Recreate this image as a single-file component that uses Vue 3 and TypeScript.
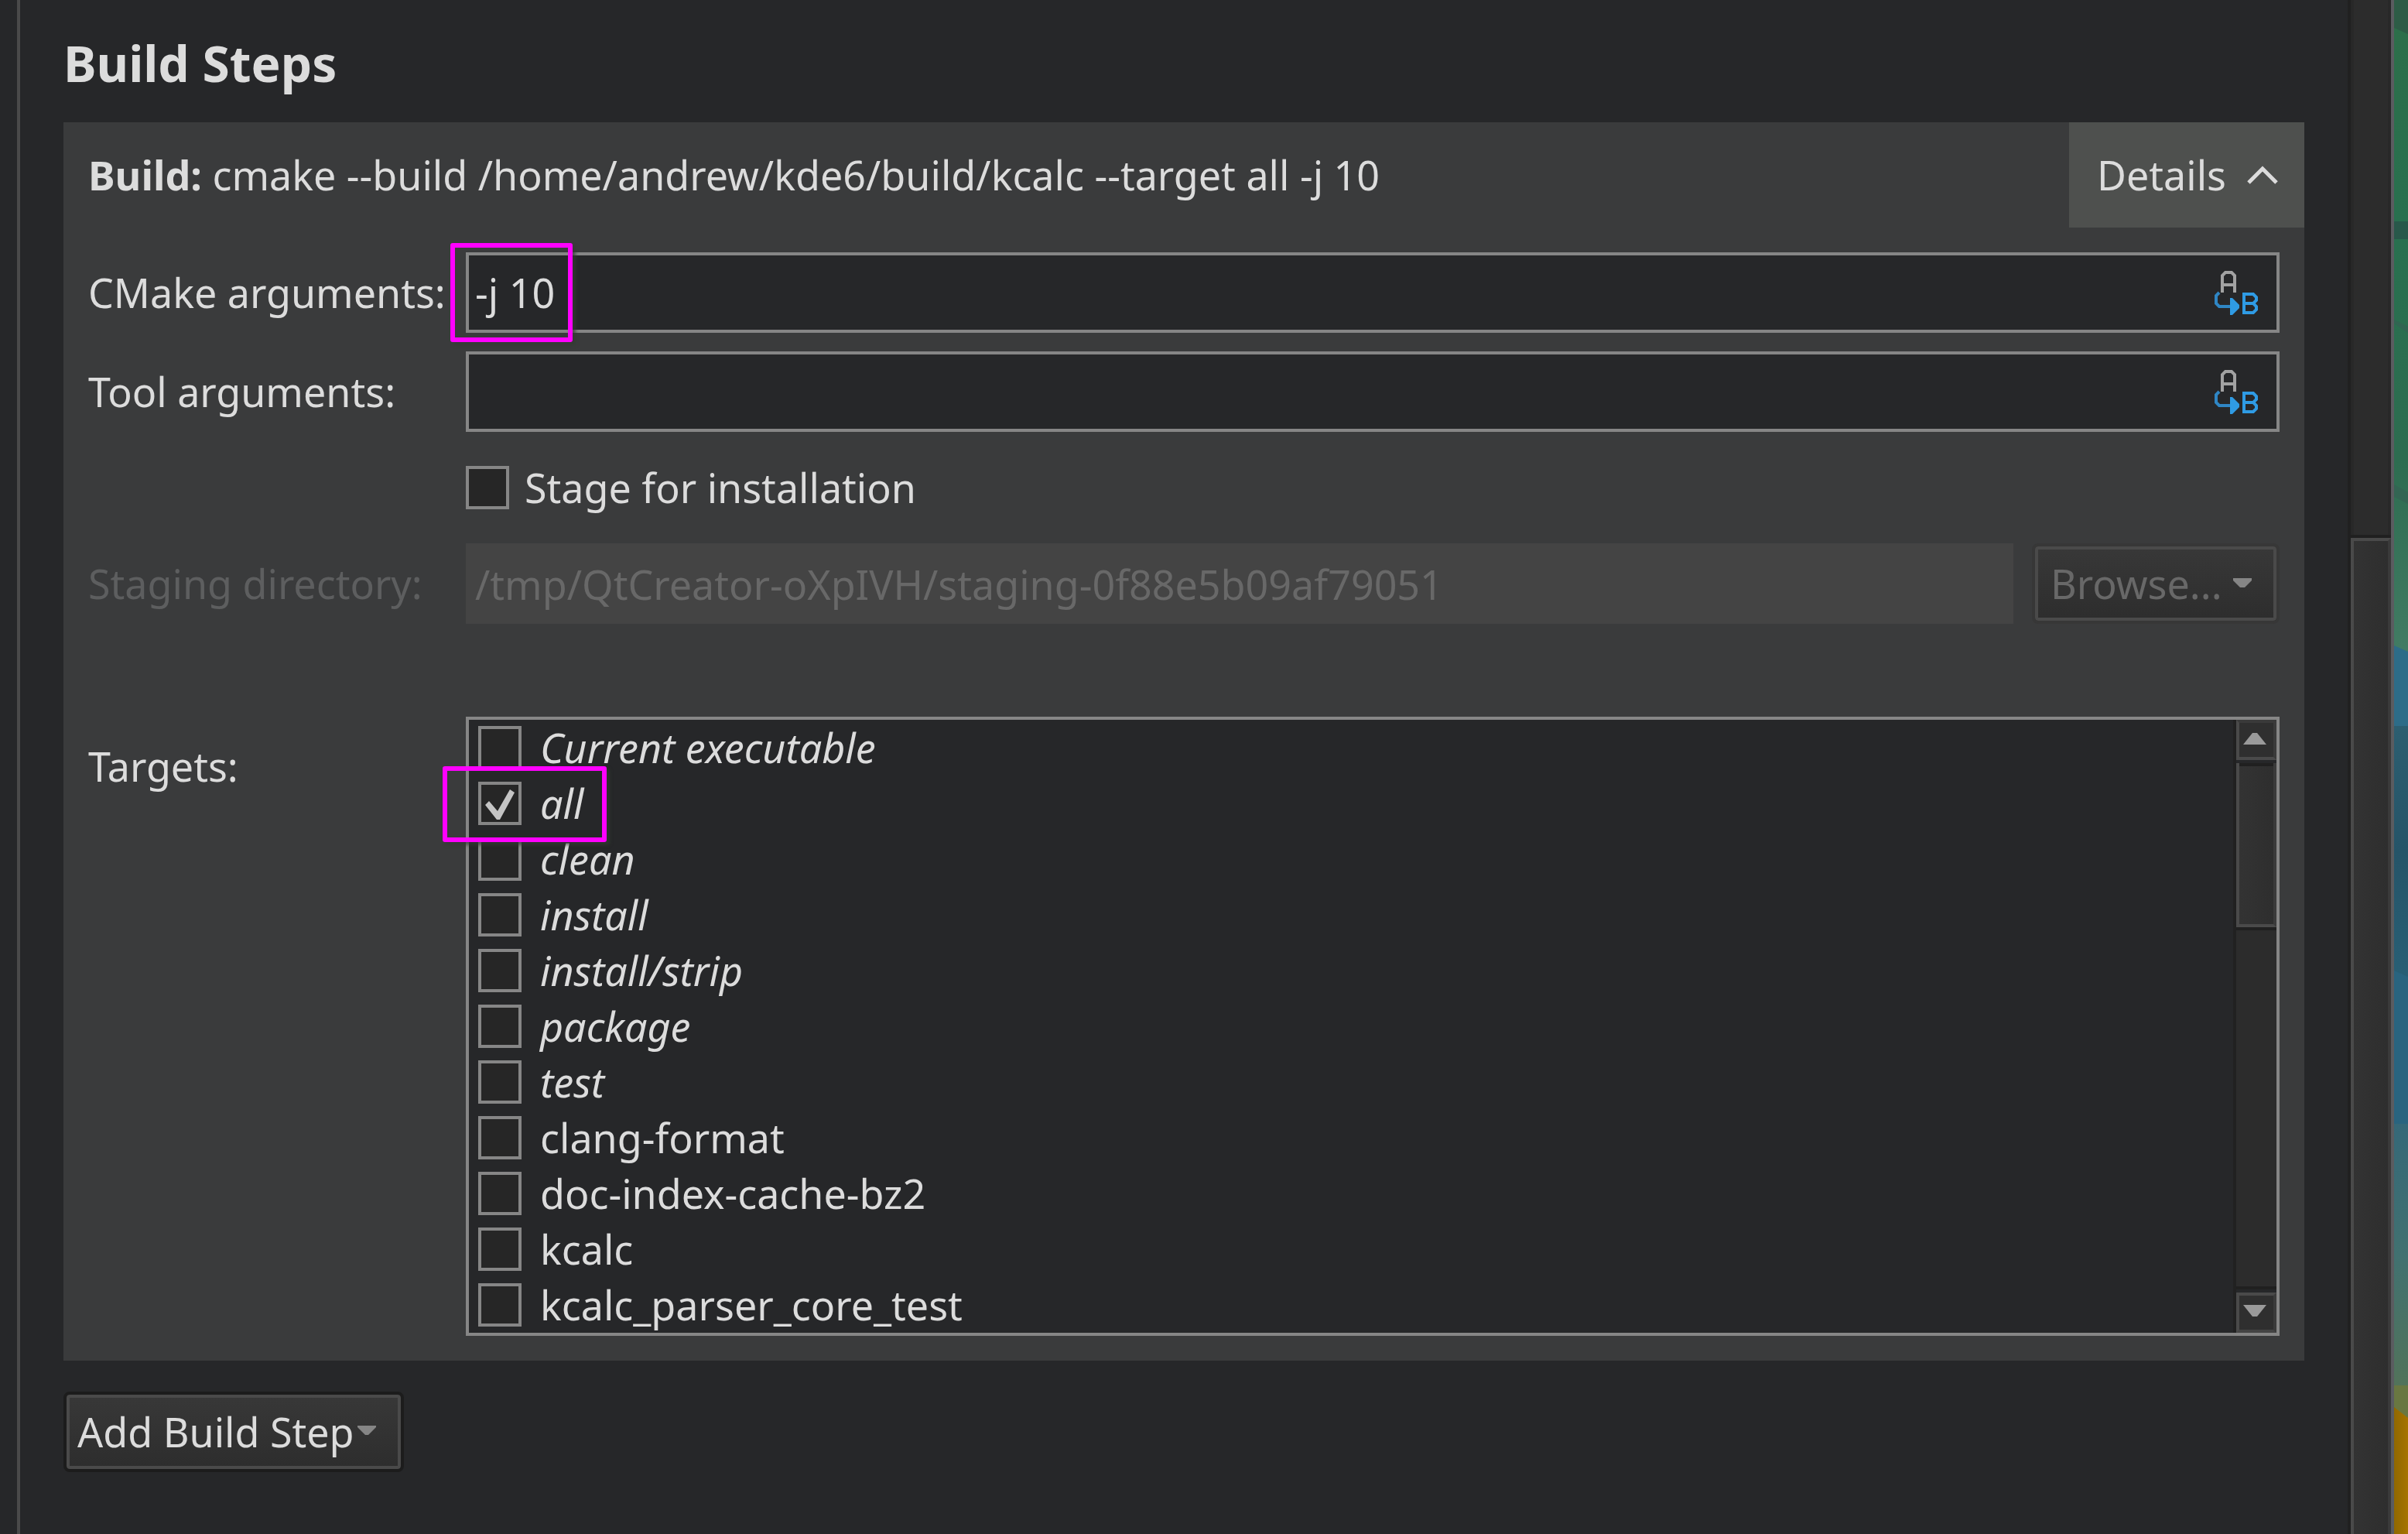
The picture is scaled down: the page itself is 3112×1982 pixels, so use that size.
<script setup lang="ts">
import { ref } from 'vue'

interface Target {
  name: string
  special: boolean
  checked: boolean
}

const cmakeArgs = ref('-j 10')
const toolArgs = ref('')
const stage = ref(false)
const stagingDir = ref('/tmp/QtCreator-oXpIVH/staging-0f88e5b09af79051')

const targets = ref<Target[]>([
  { name: 'Current executable', special: true, checked: false },
  { name: 'all', special: true, checked: true },
  { name: 'clean', special: true, checked: false },
  { name: 'install', special: true, checked: false },
  { name: 'install/strip', special: true, checked: false },
  { name: 'package', special: true, checked: false },
  { name: 'test', special: true, checked: false },
  { name: 'clang-format', special: false, checked: false },
  { name: 'doc-index-cache-bz2', special: false, checked: false },
  { name: 'kcalc', special: false, checked: false },
  { name: 'kcalc_parser_core_test', special: false, checked: false },
])
</script>

<template>
  <div class="desktop">
    <div class="window">
      <main class="content">
        <h1>Build Steps</h1>

        <section class="panel">
          <header class="panel-head">
            <p class="summary"><b>Build:</b> cmake --build /home/andrew/kde6/build/kcalc --target all -j 10</p>
            <button class="details" type="button">
              Details
              <svg width="40" height="26" viewBox="0 0 40 26" aria-hidden="true">
                <path d="M2 23 L20 5 L38 23" fill="none" stroke="#dcdcdc" stroke-width="5" />
              </svg>
            </button>
          </header>

          <div class="form">
            <label for="cmake-args">CMake arguments:</label>
            <div class="field">
              <input id="cmake-args" v-model="cmakeArgs" type="text" />
              <button class="expand" type="button" aria-label="Expand variables">
                <svg width="56" height="56" viewBox="0 0 56 56" aria-hidden="true">
                  <path d="M10 28V6L14 2H22L26 6V28M10 18H26" fill="none" stroke="#a2a2a2" stroke-width="4" />
                  <path d="M6 28L2 32V42L6 46H24" fill="none" stroke="#2f86c4" stroke-width="4" />
                  <path d="M20 35H23L32 44V48L23 57H20Z" fill="#2f9be4" />
                  <path d="M38 30H50L54 34V38L50 42L54 46V50L50 54H38ZM38 42H50" fill="none" stroke="#2f9be4" stroke-width="4" />
                </svg>
              </button>
              <span class="mark mark-args" aria-hidden="true"></span>
            </div>

            <label for="tool-args">Tool arguments:</label>
            <div class="field">
              <input id="tool-args" v-model="toolArgs" type="text" />
              <button class="expand" type="button" aria-label="Expand variables">
                <svg width="56" height="56" viewBox="0 0 56 56" aria-hidden="true">
                  <path d="M10 28V6L14 2H22L26 6V28M10 18H26" fill="none" stroke="#a2a2a2" stroke-width="4" />
                  <path d="M6 28L2 32V42L6 46H24" fill="none" stroke="#2f86c4" stroke-width="4" />
                  <path d="M20 35H23L32 44V48L23 57H20Z" fill="#2f9be4" />
                  <path d="M38 30H50L54 34V38L50 42L54 46V50L50 54H38ZM38 42H50" fill="none" stroke="#2f9be4" stroke-width="4" />
                </svg>
              </button>
            </div>

            <label class="stage">
              <input v-model="stage" class="check" type="checkbox" />
              Stage for installation
            </label>

            <label class="off" for="staging-dir">Staging directory:</label>
            <div class="staging">
              <input id="staging-dir" v-model="stagingDir" type="text" disabled />
              <button class="push browse" type="button" disabled>
                Browse...
                <svg width="24" height="16" viewBox="0 0 24 16" aria-hidden="true">
                  <path d="M0 1H24V4L15 13H9L0 4Z" fill="#858585" />
                </svg>
              </button>
            </div>

            <span id="targets-label" class="targets-label">Targets:</span>
            <div class="targets" role="group" aria-labelledby="targets-label">
              <ul>
                <li v-for="t in targets" :key="t.name">
                  <label :class="{ special: t.special }">
                    <input v-model="t.checked" class="check" type="checkbox" />
                    {{ t.name }}
                  </label>
                  <span v-if="t.name === 'all'" class="mark mark-all" aria-hidden="true"></span>
                </li>
              </ul>
              <div class="list-bar">
                <button class="step up" type="button" aria-label="Scroll up">
                  <svg width="32" height="16" viewBox="0 0 32 16" aria-hidden="true">
                    <path d="M13 1H19L31 16H1Z" fill="#9a9a9a" />
                  </svg>
                </button>
                <div class="thumb"></div>
                <div class="track"></div>
                <button class="step down" type="button" aria-label="Scroll down">
                  <svg width="32" height="16" viewBox="0 0 32 16" aria-hidden="true">
                    <path d="M1 0H31L19 15H13Z" fill="#9a9a9a" />
                  </svg>
                </button>
              </div>
            </div>
          </div>
        </section>

        <button class="push add" type="button">
          Add Build Step
          <svg width="24" height="16" viewBox="0 0 24 16" aria-hidden="true">
            <path d="M0 0H24V2L14 12H10L0 2Z" fill="#858585" />
          </svg>
        </button>
      </main>
      <div class="page-bar">
        <div class="page-track"></div>
        <div class="page-thumb"></div>
      </div>
    </div>

    <svg class="wallpaper" viewBox="0 0 18 1982" preserveAspectRatio="none" aria-hidden="true">
      <defs>
        <linearGradient id="green" x1="0" y1="0" x2="0" y2="1">
          <stop offset="0" stop-color="#2d6e49" />
          <stop offset="0.35" stop-color="#28704f" />
          <stop offset="0.7" stop-color="#2d6c50" />
          <stop offset="1" stop-color="#427c64" />
        </linearGradient>
        <linearGradient id="deep" x1="0" y1="0" x2="0" y2="1">
          <stop offset="0" stop-color="#2c5e70" />
          <stop offset="0.5" stop-color="#255468" />
          <stop offset="1" stop-color="#285f75" />
        </linearGradient>
        <linearGradient id="teal" x1="0" y1="0" x2="0" y2="1">
          <stop offset="0" stop-color="#356878" />
          <stop offset="0.5" stop-color="#417170" />
          <stop offset="1" stop-color="#52735a" />
        </linearGradient>
        <linearGradient id="gold" x1="0" y1="0" x2="1" y2="0">
          <stop offset="0" stop-color="#906800" />
          <stop offset="1" stop-color="#a67400" />
        </linearGradient>
      </defs>
      <rect width="18" height="850" fill="url(#green)" />
      <path d="M0 0H18V44L0 36Z" fill="#2d5c46" />
      <path d="M0 286H18V309H0Z" fill="#28584a" />
      <path d="M0 413L18 422V430L0 418Z" fill="#316552" />
      <path d="M0 626L18 636V651L0 642Z" fill="#336553" />
      <path d="M0 834L18 842V946H0Z" fill="#2d6c88" />
      <rect y="938" width="18" height="324" fill="url(#deep)" />
      <path d="M0 1254L18 1262V1452H0Z" fill="#29647f" />
      <rect y="1452" width="18" height="340" fill="url(#teal)" />
      <path d="M0 1790H18V1834L0 1820Z" fill="#697741" />
      <path d="M0 1818L18 1832V1982H0Z" fill="url(#gold)" />
    </svg>
  </div>
</template>

<style>
body {
  margin: 0;
  background: #262729;
}
</style>

<style scoped>
.desktop {
  display: flex;
  min-height: 100vh;
  background: #262729;
  color: #dcdcdc;
  font-family: 'Noto Sans', sans-serif;
  font-size: 52px;
  line-height: 72px;
}

.desktop *,
.desktop *::before {
  box-sizing: border-box;
}

button,
input {
  margin: 0;
  padding: 0;
  border: 0;
  border-radius: 0;
  background: none;
  color: inherit;
  font: inherit;
}

svg {
  display: block;
  flex: none;
  overflow: visible;
}

.window {
  display: flex;
  flex: 1;
  min-width: 0;
  margin-left: 22px;
  border-left: 4px solid #4a4a4a;
  border-right: 4px solid #5a5c60;
}

.content {
  flex: 1;
  min-width: 0;
  padding: 38px 56px 80px;
}

h1 {
  margin: 0 0 32px;
  font-size: 64px;
  font-weight: 700;
  line-height: 88px;
}

.panel {
  background: #3a3b3c;
}

.panel-head {
  display: flex;
  align-items: center;
  justify-content: space-between;
  padding-left: 32px;
}

.summary {
  margin: 0;
  white-space: nowrap;
}

.details {
  display: flex;
  align-items: center;
  justify-content: space-between;
  width: 304px;
  height: 136px;
  padding: 0 34px 0 36px;
  background: #4e504e;
}

.form {
  display: grid;
  grid-template-columns: 464px 1fr;
  gap: 24px;
  align-items: center;
  padding: 32px;
  white-space: nowrap;
}

.field {
  position: relative;
  display: flex;
  align-items: center;
  height: 104px;
  padding: 0 24px 0 8px;
  border: 4px solid #868686;
  background: #262729;
}

.field input {
  flex: 1;
  min-width: 0;
  height: 72px;
  outline: 0;
}

.stage {
  grid-column: 2;
  display: flex;
  align-items: center;
  gap: 20px;
  height: 96px;
}

.check {
  flex: none;
  width: 56px;
  height: 56px;
  border: 4px solid #868686;
  background: #262626;
  appearance: none;
}

.check:checked::before {
  content: '';
  display: block;
  width: 48px;
  height: 48px;
  background: #c4c4c4;
  clip-path: polygon(5px 26px, 10px 21px, 21px 34px, 37px 6px, 43px 10px, 24px 45px, 20px 45px);
}

.off {
  color: #5d5e5f;
}

.staging {
  display: flex;
  align-items: center;
  gap: 24px;
}

.staging input {
  flex: 1;
  min-width: 0;
  height: 104px;
  padding: 0 12px;
  background: #444444;
  color: #686868;
}

.push {
  display: flex;
  align-items: center;
  height: 104px;
  border: 4px solid #1c1c1c;
  border-radius: 8px;
  background: linear-gradient(#383838, #2d2d2d);
  box-shadow: inset 0 0 0 4px #4a4a4a;
  white-space: nowrap;
}

.browse {
  justify-content: space-between;
  width: 320px;
  padding: 0 32px 0 20px;
  border-color: #373737;
  color: #686868;
}

.add {
  gap: 4px;
  width: 440px;
  margin-top: 40px;
  padding: 0 14px;
}

.targets-label {
  align-self: start;
  margin-top: 124px;
}

.targets {
  display: flex;
  margin-top: 96px;
  border: 4px solid #868686;
  background: #262729;
}

.targets ul {
  flex: 1;
  margin: 0;
  padding: 0;
  list-style: none;
}

.targets li {
  position: relative;
  padding-left: 12px;
}

.targets label {
  display: flex;
  align-items: center;
  gap: 24px;
}

.special {
  font-style: italic;
}

.mark {
  position: absolute;
  border: 6px solid #ff00ff;
  border-radius: 3px;
  box-shadow: 4px 4px 4px rgba(50, 58, 48, 0.7);
  pointer-events: none;
}

.mark-args {
  top: -16px;
  left: -24px;
  width: 158px;
  height: 128px;
}

.mark-all {
  z-index: 1;
  top: -12px;
  left: -34px;
  width: 212px;
  height: 98px;
}

.list-bar {
  display: flex;
  flex-direction: column;
  width: 56px;
  border-left: 4px solid #212121;
}

.step {
  display: grid;
  place-items: center;
  height: 52px;
  padding: 0 4px 4px 0;
  border: 4px solid #4a4a4a;
  border-right-color: #3a3a3a;
  background: #2f2f2f;
}

.up {
  border-top-color: #3a3a3a;
}

.down {
  border-bottom-color: #444444;
}

.thumb {
  height: 212px;
  margin-top: 4px;
  border: solid #4a4a4a;
  border-width: 0 4px 4px;
  border-right-color: #3a3a3a;
  background: linear-gradient(90deg, #333333, #2e2e2e);
  box-shadow: inset 0 4px #202020;
}

.track {
  flex: 1;
  margin-bottom: 4px;
  border: solid #202020;
  border-width: 4px 0;
  background: #2c2c2c;
}

.page-bar {
  display: flex;
  flex-direction: column;
  width: 56px;
  border-left: 4px solid #202020;
  background: #2c2c2c;
}

.page-track {
  flex: 35;
  border: solid #282828;
  border-width: 0 4px;
}

.page-thumb {
  flex: 65;
  margin-top: 4px;
  border: 4px solid #4a4a4a;
  border-right-color: #3a3a3a;
  border-bottom: 0;
  background: linear-gradient(90deg, #333333, #2e2e2e);
  box-shadow: 0 -4px #202020;
}

.wallpaper {
  width: 18px;
  height: auto;
}
</style>
